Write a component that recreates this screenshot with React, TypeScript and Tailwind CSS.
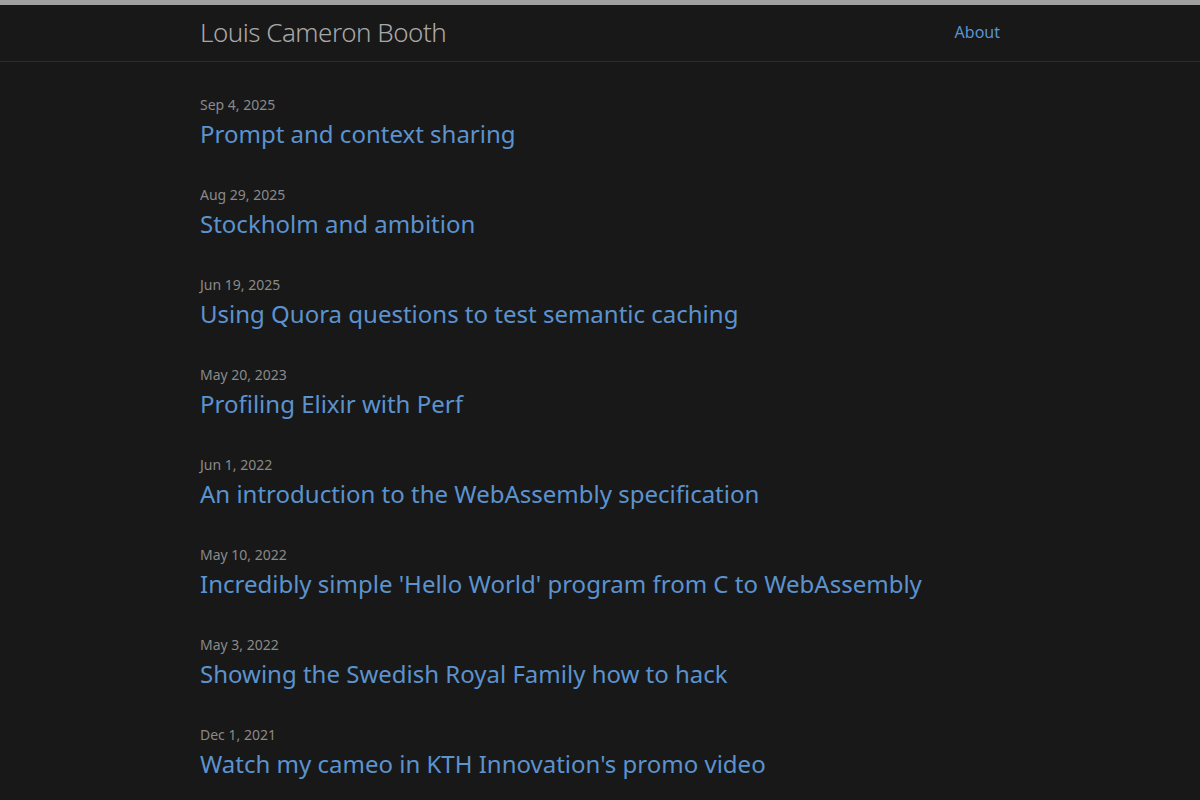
const posts = [
  { date: "Sep 4, 2025", title: "Prompt and context sharing" },
  { date: "Aug 29, 2025", title: "Stockholm and ambition" },
  { date: "Jun 19, 2025", title: "Using Quora questions to test semantic caching" },
  { date: "May 20, 2023", title: "Profiling Elixir with Perf" },
  { date: "Jun 1, 2022", title: "An introduction to the WebAssembly specification" },
  { date: "May 10, 2022", title: "Incredibly simple 'Hello World' program from C to WebAssembly" },
  { date: "May 3, 2022", title: "Showing the Swedish Royal Family how to hack" },
  { date: "Dec 1, 2021", title: "Watch my cameo in KTH Innovation's promo video" },
];

export default function App() {
  return (
    <div className="min-h-screen bg-[#181818] font-['Noto_Sans','Open_Sans',sans-serif] text-[#bbbbbb]">
      <header className="border-t-[5px] border-b border-t-[#a0a0a0] border-b-[#2c2c2c]">
        <div className="mx-auto flex h-[56px] w-[800px] items-center justify-between pb-[2px]">
          <a href="#" className="text-[26px] font-light leading-[54px] tracking-[-0.5px] text-[#a8a8a8]">
            Louis Cameron Booth
          </a>
          <nav>
            <a href="#" className="text-[16px] leading-[24px] text-[#5b93cf]">
              About
            </a>
          </nav>
        </div>
      </header>
      <main className="mx-auto w-[800px] pt-[32px]">
        <ul>
          {posts.map((p) => (
            <li key={p.title} className="mb-[31px]">
              <div className="text-[14px] leading-[21px] text-[#8a8a8a]">{p.date}</div>
              <h3 className="text-[24px] leading-[38px]">
                <a href="#" className="text-[#5b93cf]">
                  {p.title}
                </a>
              </h3>
            </li>
          ))}
        </ul>
      </main>
    </div>
  );
}
